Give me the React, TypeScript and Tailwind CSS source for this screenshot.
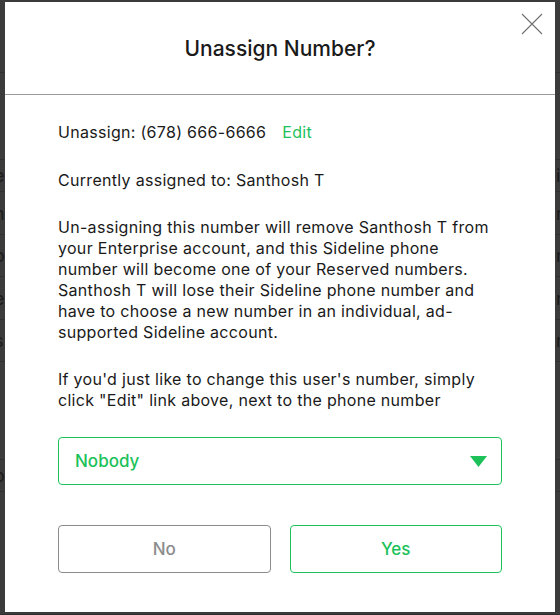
import React from "react";

// page behind the overlay, only a sliver of it shows at the edges
const bgRows = [
  { h: "h-[73px]", left: "", right: "" },
  { h: "h-[87px]", left: "", right: "" },
  { h: "h-[32px]", left: "e", right: "ic" },
  { h: "h-[43px]", left: "n", right: "r" },
  { h: "h-[42px]", left: "o", right: "r" },
  { h: "h-[43px]", left: "e", right: "r" },
  { h: "h-[42px]", left: "s", right: "r" },
  { h: "h-[98px]", left: "", right: "" },
  { h: "h-[32px]", left: "o", right: "" },
  { h: "h-[123px]", left: "", right: "" },
];

const Backdrop = () => {
  return (
    <div className="flex flex-col bg-[#3b3b3b] text-[18px] text-[#1c1c1c] h-[615px]">
      {bgRows.map((r, i) => (
        <div
          key={i}
          className={r.h + " flex items-center justify-between border-b border-[#303030] overflow-hidden"}
        >
          <span className="-ml-[6px]">{r.left}</span>
          <span className="w-[4px] overflow-visible whitespace-nowrap">{r.right}</span>
        </div>
      ))}
    </div>
  );
};

const UnassignModal = () => {
  return (
    <div className="absolute left-[5px] top-[2px] w-[550px] h-[610px] bg-white flex flex-col text-[#1a1a1a]">
      <div className="relative h-[92px] flex items-center justify-center border-b border-[#9a9a9a] box-content">
        <h2 className="text-[21px] font-medium leading-none">Unassign Number?</h2>
        <button className="absolute right-[12px] top-[11px] w-[22px] h-[22px]">
          <svg viewBox="0 0 22 22" className="w-[22px] h-[22px]" fill="none" stroke="#707070" strokeWidth="1.1">
            <path d="M1 1 L21 21 M21 1 L1 21" />
          </svg>
        </button>
      </div>
      <div className="px-[53px] pt-[27px] text-[16px] leading-[21px] tracking-[0.3px]">
        <p>
          Unassign: (678) 666-6666
          <span className="ml-[16px] text-[#1cc15a] cursor-pointer">Edit</span>
        </p>
        <p className="mt-[27px]">Currently assigned to: Santhosh T</p>
        <p className="mt-[26px]">
          Un-assigning this number will remove Santhosh T from your Enterprise account, and this
          Sideline phone number will become one of your Reserved numbers. Santhosh T will lose their
          Sideline phone number and have to choose a new number in an individual, ad-supported
          Sideline account.
        </p>
        <p className="mt-[26px]">
          If you'd just like to change this user's number, simply click "Edit" link above, next to the
          phone number
        </p>
        <div className="mt-[26px] h-[48px] border border-[#1cc15a] rounded-[4px] flex items-center justify-between pl-[16px] pr-[14px] tracking-normal">
          <span className="text-[17px] font-medium text-[#1cc15a]">Nobody</span>
          <svg viewBox="0 0 17 11" className="w-[17px] h-[11px]" fill="#1cc15a">
            <path d="M0 0 H17 L8.5 11 Z" />
          </svg>
        </div>
        <div className="mt-[40px] grid grid-cols-2 gap-[19px] tracking-normal">
          <button className="h-[48px] border border-[#8c8c8c] rounded-[4px] text-[17px] font-medium text-[#8c8c8c]">
            No
          </button>
          <button className="h-[48px] border border-[#1cc15a] rounded-[4px] text-[17px] font-medium text-[#1cc15a]">
            Yes
          </button>
        </div>
      </div>
    </div>
  );
};

export default function App() {
  return (
    <div className="relative w-[560px] h-[615px] overflow-hidden font-['Inter','Liberation_Sans',sans-serif]">
      <Backdrop />
      <UnassignModal />
    </div>
  );
}
